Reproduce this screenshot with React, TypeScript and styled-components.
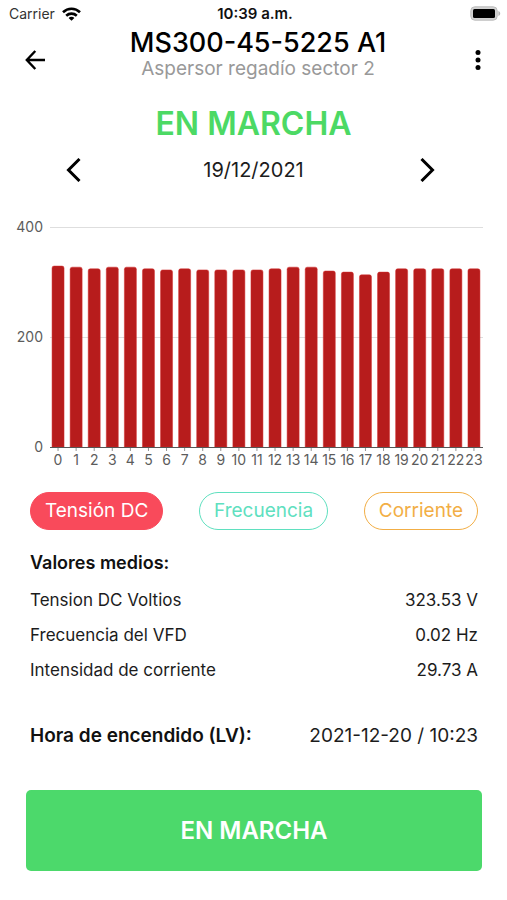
import React, { useState } from "react";
import styled, { createGlobalStyle } from "styled-components";

const GlobalStyle = createGlobalStyle`
  *, *::before, *::after { box-sizing: border-box; }
  body {
    margin: 0;
    background: #fff;
    color: #1c1c1c;
    font-family: Inter, "Liberation Sans", sans-serif;
  }
  button { font-family: inherit; }
`;

const Screen = styled.main`
  display: flex;
  flex-direction: column;
  min-height: 100vh;
`;

const StatusBar = styled.div`
  display: grid;
  grid-template-columns: 1fr auto 1fr;
  align-items: center;
  height: 27px;
  padding: 0 6px 0 9px;
  font-size: 14px;
  line-height: 20px;
`;

const Carrier = styled.span`
  display: flex;
  align-items: center;
  gap: 7px;
  color: #333;
`;

const Clock = styled.span`
  font-size: 15px;
  font-weight: 600;
  color: #111;
`;

const BatterySlot = styled.span`
  display: flex;
  justify-content: flex-end;
`;

const Header = styled.header`
  display: grid;
  grid-template-columns: 32px 1fr 32px;
  align-items: center;
  height: 65px;
  padding: 0 13px 0 19px;
`;

const HeaderTitles = styled.div`
  align-self: start;
  padding: 2px 0 0 3px;
  text-align: center;
`;

const Title = styled.h1`
  margin: 0;
  font-size: 27px;
  line-height: 28px;
  font-weight: 500;
  color: #000;
`;

const Subtitle = styled.p`
  margin: 0;
  font-size: 19px;
  line-height: 24px;
  color: #999;
`;

const IconButton = styled.button`
  display: grid;
  place-items: center;
  width: 32px;
  height: 32px;
  padding: 0;
  border: 0;
  background: none;
  color: #000;
  cursor: pointer;
`;

const RunState = styled.h2`
  margin: 12px 0 0;
  text-align: center;
  font-size: 32px;
  line-height: 40px;
  font-weight: 600;
  color: #4cd964;
`;

const DateNav = styled.nav`
  display: flex;
  align-items: center;
  justify-content: space-between;
  margin-top: 10px;
  padding: 0 64px 0 57px;
`;

const CurrentDate = styled.span`
  padding-left: 7px;
  font-size: 20px;
  line-height: 32px;
`;

const Chart = styled.svg`
  display: block;
  width: 100%;
  height: auto;
  margin-top: 26px;
`;

const AxisLabel = styled.text`
  font-size: 14px;
  fill: #5c5c5c;
`;

const Body = styled.div`
  padding: 0 29px 0 30px;
`;

const Series = styled.div`
  display: flex;
  justify-content: space-between;
  margin-top: 20px;
`;

const Pill = styled.button<{ $color: string; $active: boolean }>`
  height: 38px;
  padding: 0 14px;
  border: 1px solid ${(p) => p.$color};
  border-radius: 19px;
  background: ${(p) => (p.$active ? p.$color : "transparent")};
  color: ${(p) => (p.$active ? "#fff" : p.$color)};
  font-size: 19px;
  line-height: 24px;
  cursor: pointer;
`;

const SectionTitle = styled.h3`
  margin: 21px 0 7px;
  font-size: 18px;
  line-height: 24px;
  font-weight: 600;
  color: #111;
`;

const Values = styled.dl`
  margin: 0;
`;

const ValueRow = styled.div`
  display: flex;
  align-items: center;
  justify-content: space-between;
  height: 35px;
  font-size: 17px;
  line-height: 24px;
`;

const Term = styled.dt``;

const Amount = styled.dd`
  margin: 0;
`;

const StartRow = styled(ValueRow)`
  margin-top: 31px;
  font-size: 19px;

  ${Term} {
    font-weight: 600;
    color: #111;
  }
`;

const RunButton = styled.button`
  height: 81px;
  margin: 37px 25px 28px 26px;
  border: 0;
  border-radius: 5px;
  background: #4cd96b;
  color: #fff;
  font-size: 24px;
  line-height: 32px;
  font-weight: 600;
  cursor: pointer;
`;

const READINGS = [
  329, 327, 324, 327, 327, 324, 322, 324, 322, 322, 322, 322,
  324, 327, 327, 320, 318, 313, 318, 324, 324, 324, 324, 324,
];

const PLOT = { left: 49, width: 434, top: 15, height: 220, max: 400 };
const BAR_WIDTH = 12;
const baseline = PLOT.top + PLOT.height;
const yOf = (value: number) => baseline - (value / PLOT.max) * PLOT.height;

const barPath = (center: number, value: number) => {
  const l = center - BAR_WIDTH / 2;
  const r = center + BAR_WIDTH / 2;
  const t = yOf(value);
  return `M${l} ${baseline}V${t + 2}Q${l} ${t} ${l + 2} ${t}H${r - 2}Q${r} ${t} ${r} ${t + 2}V${baseline}Z`;
};

function HourlyChart() {
  const slot = PLOT.width / READINGS.length;
  return (
    <Chart viewBox="0 0 507 260" role="img" aria-label="Tensión DC por hora">
      {[400, 200, 0].map((v) => (
        <g key={v}>
          {v > 0 && <path d={`M50 ${yOf(v) + 0.5}H483`} stroke="#dedede" />}
          <AxisLabel x={43} y={yOf(v) + 5} textAnchor="end">{v}</AxisLabel>
        </g>
      ))}
      {READINGS.map((v, hour) => {
        const center = PLOT.left + slot * (hour + 0.5);
        return (
          <g key={hour}>
            <path d={barPath(center, v)} fill="#b71c1c" stroke="#d32f2f" strokeWidth={0.5} />
            <path d={`M${center} ${baseline}v4`} stroke="#777" strokeWidth={0.8} />
            <AxisLabel x={center} y={baseline + 18} textAnchor="middle">{hour}</AxisLabel>
          </g>
        );
      })}
      <path d={`M50 ${baseline + 0.5}H483`} stroke="#555" />
    </Chart>
  );
}

const SERIES = [
  { name: "Tensión DC", color: "#f94a5b" },
  { name: "Frecuencia", color: "#5fe0bf" },
  { name: "Corriente", color: "#f2ae45" },
];

const AVERAGES = [
  ["Tension DC Voltios", "323.53 V"],
  ["Frecuencia del VFD", "0.02 Hz"],
  ["Intensidad de corriente", "29.73 A"],
];

export default function App() {
  const [active, setActive] = useState("Tensión DC");
  return (
    <Screen>
      <GlobalStyle />
      <StatusBar>
        <Carrier>
          Carrier
          <svg width="19" height="14" viewBox="0 0 19 14" fill="none" stroke="#000" strokeWidth="2.6" aria-hidden="true">
            <path d="M1 5.2C5.8.6 13.2.6 18 5.2" />
            <path d="M4.2 8.7c3-2.8 7.6-2.8 10.6 0" />
            <path d="M9.5 13.8 6.6 10.9c1.6-1.5 4.2-1.5 5.8 0Z" fill="#000" stroke="none" />
          </svg>
        </Carrier>
        <Clock>10:39 a.m.</Clock>
        <BatterySlot>
          <svg width="31" height="15" viewBox="0 0 31 15" aria-hidden="true">
            <rect x="0.8" y="0.8" width="26.4" height="13.4" rx="4" fill="#d2d2d2" stroke="#bdbdbd" strokeWidth="1" />
            <rect x="3" y="3" width="22" height="9" rx="1.5" fill="#000" />
            <path d="M28.4 5v5c2.4-.8 2.4-4.2 0-5Z" fill="#b5b5b5" />
          </svg>
        </BatterySlot>
      </StatusBar>

      <Header>
        <IconButton aria-label="Volver">
          <svg width="20" height="20" viewBox="0 0 20 20" fill="none" stroke="currentColor" strokeWidth="2.4" aria-hidden="true">
            <path d="M10.3 1 1.8 10l8.5 9M1.8 10H20" />
          </svg>
        </IconButton>
        <HeaderTitles>
          <Title>MS300-45-5225 A1</Title>
          <Subtitle>Aspersor regadío sector 2</Subtitle>
        </HeaderTitles>
        <IconButton aria-label="Más opciones">
          <svg width="6" height="20" viewBox="0 0 6 20" fill="currentColor" aria-hidden="true">
            <circle cx="3" cy="2.6" r="2.5" />
            <circle cx="3" cy="10" r="2.5" />
            <circle cx="3" cy="17.4" r="2.5" />
          </svg>
        </IconButton>
      </Header>

      <RunState>EN MARCHA</RunState>

      <DateNav aria-label="Fecha">
        <IconButton aria-label="Día anterior">
          <svg width="15" height="24" viewBox="0 0 15 24" fill="none" stroke="currentColor" strokeWidth="3" aria-hidden="true">
            <path d="M13.5 1 2.5 12l11 11" />
          </svg>
        </IconButton>
        <CurrentDate>19/12/2021</CurrentDate>
        <IconButton aria-label="Día siguiente">
          <svg width="15" height="24" viewBox="0 0 15 24" fill="none" stroke="currentColor" strokeWidth="3" aria-hidden="true">
            <path d="m1.5 1 11 11-11 11" />
          </svg>
        </IconButton>
      </DateNav>

      <HourlyChart />

      <Body>
        <Series>
          {SERIES.map((s) => (
            <Pill
              key={s.name}
              $color={s.color}
              $active={s.name === active}
              aria-pressed={s.name === active}
              onClick={() => setActive(s.name)}
            >
              {s.name}
            </Pill>
          ))}
        </Series>

        <SectionTitle>Valores medios:</SectionTitle>
        <Values>
          {AVERAGES.map(([label, value]) => (
            <ValueRow key={label}>
              <Term>{label}</Term>
              <Amount>{value}</Amount>
            </ValueRow>
          ))}
          <StartRow>
            <Term>Hora de encendido (LV):</Term>
            <Amount>2021-12-20 / 10:23</Amount>
          </StartRow>
        </Values>
      </Body>

      <RunButton>EN MARCHA</RunButton>
    </Screen>
  );
}
